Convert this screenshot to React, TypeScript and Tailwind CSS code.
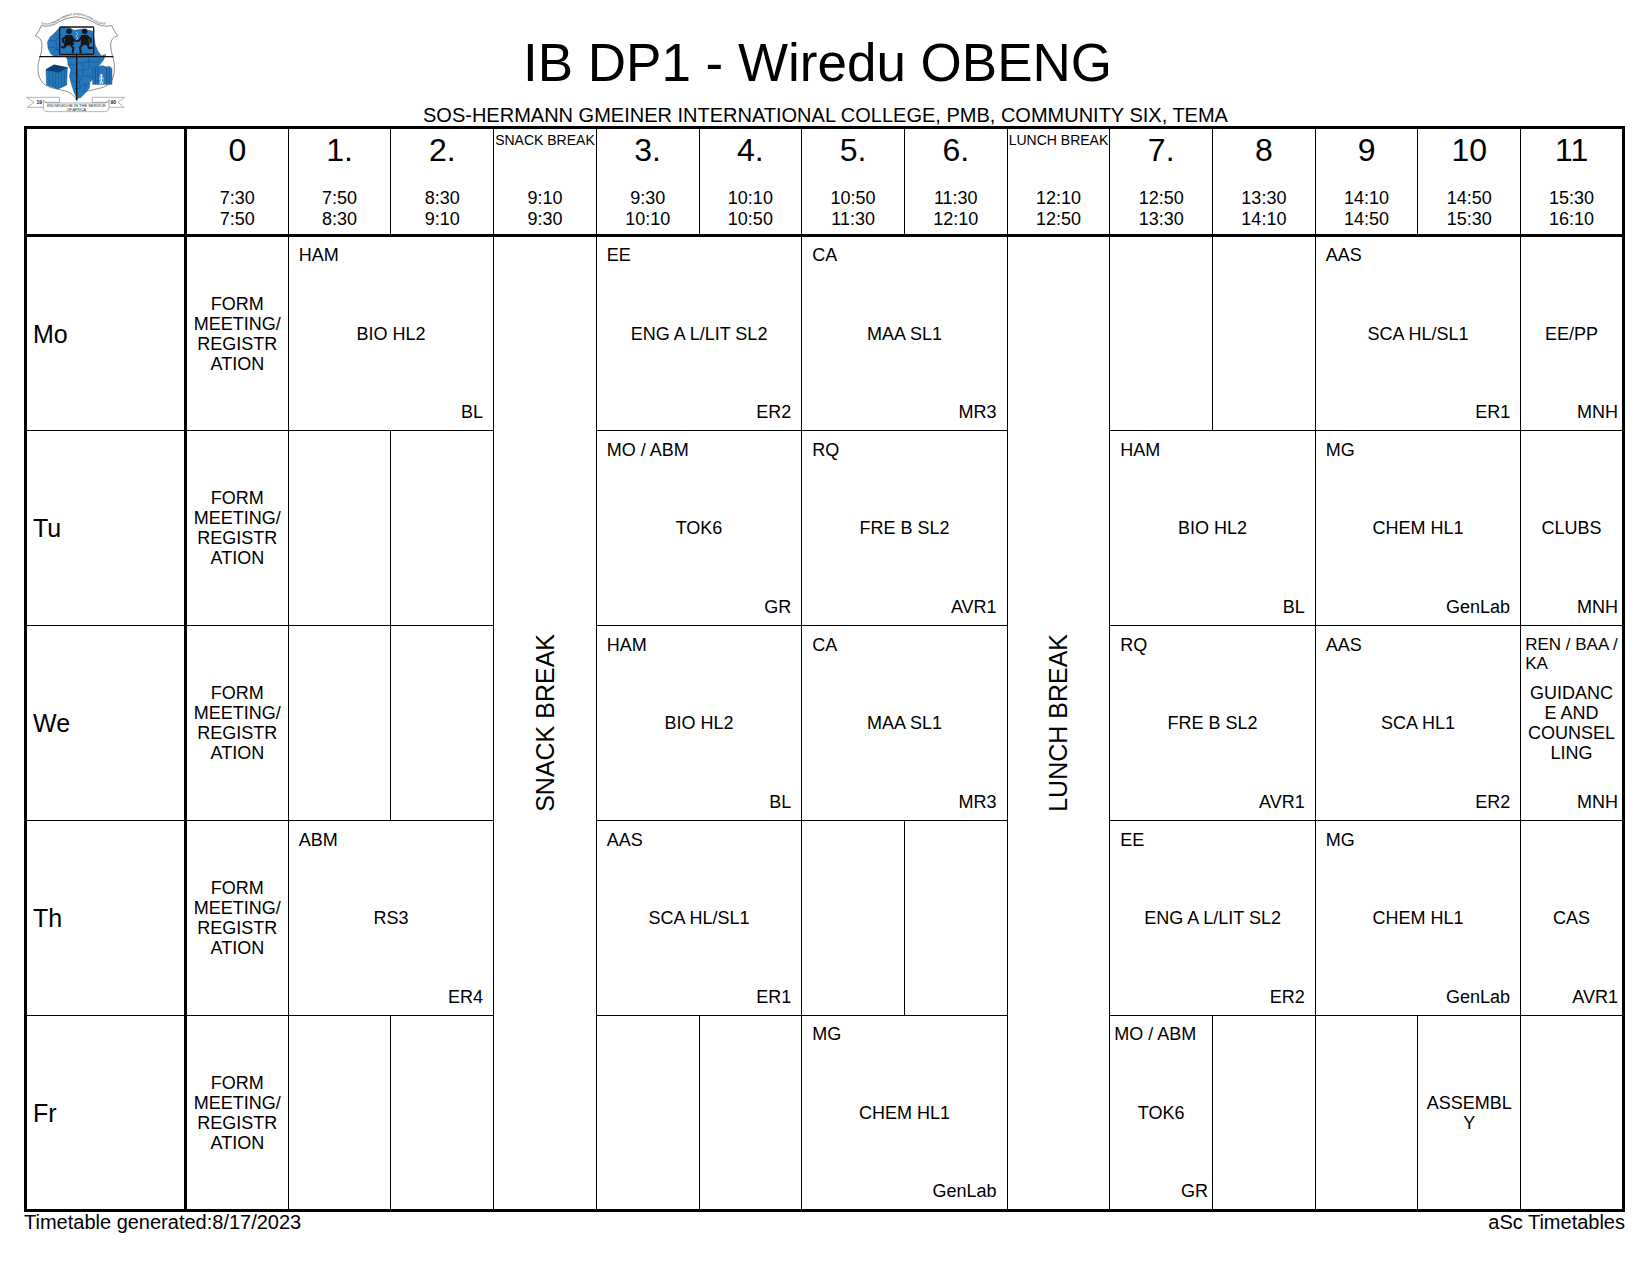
import React from "react";

type Lesson = {
  span?: 1 | 2;
  teacher?: string[];
  subject?: string[];
  room?: string;
};

type Slot = Lesson | "snack" | "lunch";

const periods = [
  { name: "0", from: "7:30", to: "7:50" },
  { name: "1.", from: "7:50", to: "8:30" },
  { name: "2.", from: "8:30", to: "9:10" },
  { name: "SNACK BREAK", from: "9:10", to: "9:30", isBreak: true },
  { name: "3.", from: "9:30", to: "10:10" },
  { name: "4.", from: "10:10", to: "10:50" },
  { name: "5.", from: "10:50", to: "11:30" },
  { name: "6.", from: "11:30", to: "12:10" },
  { name: "LUNCH BREAK", from: "12:10", to: "12:50", isBreak: true },
  { name: "7.", from: "12:50", to: "13:30" },
  { name: "8", from: "13:30", to: "14:10" },
  { name: "9", from: "14:10", to: "14:50" },
  { name: "10", from: "14:50", to: "15:30" },
  { name: "11", from: "15:30", to: "16:10" },
];

const form: Lesson = { subject: ["FORM", "MEETING/", "REGISTR", "ATION"] };
const free: Lesson = {};
const double = (teacher: string, subject: string, room: string): Lesson => ({
  span: 2,
  teacher: [teacher],
  subject: [subject],
  room,
});

const days: { name: string; slots: Slot[] }[] = [
  {
    name: "Mo",
    slots: [
      form,
      double("HAM", "BIO HL2", "BL"),
      "snack",
      double("EE", "ENG A L/LIT SL2", "ER2"),
      double("CA", "MAA SL1", "MR3"),
      "lunch",
      free,
      free,
      double("AAS", "SCA HL/SL1", "ER1"),
      { subject: ["EE/PP"], room: "MNH" },
    ],
  },
  {
    name: "Tu",
    slots: [
      form,
      free,
      free,
      double("MO / ABM", "TOK6", "GR"),
      double("RQ", "FRE B SL2", "AVR1"),
      double("HAM", "BIO HL2", "BL"),
      double("MG", "CHEM HL1", "GenLab"),
      { subject: ["CLUBS"], room: "MNH" },
    ],
  },
  {
    name: "We",
    slots: [
      form,
      free,
      free,
      double("HAM", "BIO HL2", "BL"),
      double("CA", "MAA SL1", "MR3"),
      double("RQ", "FRE B SL2", "AVR1"),
      double("AAS", "SCA HL1", "ER2"),
      {
        teacher: ["REN / BAA /", "KA"],
        subject: ["GUIDANC", "E AND", "COUNSEL", "LING"],
        room: "MNH",
      },
    ],
  },
  {
    name: "Th",
    slots: [
      form,
      double("ABM", "RS3", "ER4"),
      double("AAS", "SCA HL/SL1", "ER1"),
      free,
      free,
      double("EE", "ENG A L/LIT SL2", "ER2"),
      double("MG", "CHEM HL1", "GenLab"),
      { subject: ["CAS"], room: "AVR1" },
    ],
  },
  {
    name: "Fr",
    slots: [
      form,
      free,
      free,
      free,
      free,
      double("MG", "CHEM HL1", "GenLab"),
      { teacher: ["MO / ABM"], subject: ["TOK6"], room: "GR" },
      free,
      free,
      { subject: ["ASSEMBL", "Y"] },
      free,
    ],
  },
];

function Lines({ lines }: { lines?: string[] }) {
  return (
    <>
      {lines?.map((line) => (
        <span key={line} className="block whitespace-nowrap">
          {line}
        </span>
      ))}
    </>
  );
}

function LessonCell({ lesson }: { lesson: Lesson }) {
  const wide = lesson.span === 2;
  const compact = (lesson.teacher?.length ?? 0) > 1;
  return (
    <td colSpan={lesson.span ?? 1} className="border border-black p-0">
      <div
        className={`grid h-[193px] grid-rows-[1fr_auto_1fr] py-2 text-[18px] leading-5 ${
          wide ? "px-[10px]" : "px-1"
        }`}
      >
        <div className={compact ? "text-[17px] leading-[19px]" : ""}>
          <Lines lines={lesson.teacher} />
        </div>
        <div className="flex flex-col items-center">
          <Lines lines={lesson.subject} />
        </div>
        <div className="self-end text-right">{lesson.room}</div>
      </div>
    </td>
  );
}

function BreakCell({ label }: { label: string }) {
  return (
    <td rowSpan={days.length} className="border border-black p-0">
      <div className="flex items-center justify-center">
        <span className="rotate-180 whitespace-nowrap text-[25px] leading-7 [writing-mode:vertical-rl]">
          {label}
        </span>
      </div>
    </td>
  );
}

function Crest() {
  return (
    <svg viewBox="0 0 330 345" className="h-[115px] w-[110px]" role="img" aria-label="College crest">
      <defs>
        <path id="crest-arch" d="M64 57 Q92 64 116 47 Q168 13 220 47 Q244 64 276 57" />
      </defs>
      <text fontFamily="Liberation Sans, sans-serif" fontSize="8" fill="#222">
        <textPath href="#crest-arch">SOS-HERMANN GMEINER INTERNATIONAL COLLEGE</textPath>
      </text>
      {/* shield */}
      <path
        d="M64 62 Q58 78 46 92 Q66 98 66 120 Q66 140 60 156 Q52 178 54 200 Q58 236 90 247 Q116 253 140 259 Q160 266 170 286 Q180 266 200 259 Q224 253 250 247 Q280 236 283 200 Q285 178 279 156 Q272 140 272 120 Q272 98 293 92 Q282 78 275 62 Q244 68 220 51 Q168 20 116 51 Q92 68 64 62Z"
        fill="none"
        stroke="#555"
        strokeWidth="2"
      />
      {/* continent */}
      <path
        d="M118 68 L132 66 L150 68 L162 76 L186 72 L206 76 L218 78 L222 98 L226 120 L234 138 L244 152 L258 148 L250 166 L236 184 L224 200 L222 220 L210 232 L208 250 L196 264 L182 278 L170 280 L162 262 L154 238 L148 214 L152 194 L144 180 L142 162 L134 152 L118 156 L104 156 L92 146 L84 130 L82 112 L90 96 L104 84Z"
        fill="#2477bd"
        stroke="#174f7d"
        strokeWidth="1"
      />
      <path d="M245 196 L252 186 L255 198 L248 222 L240 228 L238 214Z" fill="#2477bd" />
      <g fill="none" stroke="#164a78" strokeWidth="1.5">
        <path d="M88 106 L108 108 L118 92 L104 86 M84 126 L104 128 L120 136 M108 108 L110 132 M98 146 L110 132 L122 150 M142 162 L160 158 L170 142 L186 148 L204 144 L222 150 M146 178 L164 180 L174 172 L190 176 L204 168 L224 172 L240 170 M150 204 L172 206 L176 194 L194 196 L208 186 L224 196 M154 228 L178 230 L184 216 L200 212 L220 216 M164 252 L180 250 L190 238 L206 240 M188 176 L192 198 L186 214 M204 144 L206 168 L208 186 M174 206 L178 230 L180 250 M194 260 L196 240" />
      </g>
      {/* shield divisions and picture frame */}
      <path d="M58 155 H280 M170 148 V286" fill="none" stroke="#111" strokeWidth="4" />
      <rect x="119" y="66" width="102" height="82" rx="3" fill="none" stroke="#161616" strokeWidth="4" />
      {/* children */}
      <g fill="#151515" stroke="#151515" strokeLinecap="round" strokeLinejoin="round">
        <circle cx="147" cy="79" r="8" strokeWidth="1" />
        <circle cx="194" cy="79" r="8" strokeWidth="1" />
        <path d="M138 92 L154 92 L160 118 L134 120Z" strokeWidth="4" />
        <path d="M202 92 L186 92 L184 118 L206 118Z" strokeWidth="4" />
        <path
          d="M140 93 L128 102 L130 112 M154 93 L162 106 L170 108 M140 118 L132 128 L126 126 M152 118 L160 130 L158 142 M200 93 L212 102 L212 112 M186 93 L178 106 L170 108 M188 118 L180 128 L182 142 M202 118 L208 130 L216 128"
          fill="none"
          strokeWidth="6"
        />
      </g>
      <path d="M168 80 l5 6 -4 7 4 7 -4 6" fill="none" stroke="#a9c8e2" strokeWidth="3" />
      {/* cube */}
      <path d="M78 194 L102 180 L142 188 L140 240 L114 252 L80 240Z" fill="#2477bd" stroke="#103f6e" strokeWidth="1.5" />
      <path d="M78 194 L102 180 L142 188 L116 202Z" fill="#0b3f78" stroke="#0b2f58" strokeWidth="1.5" />
      <path d="M116 202 L114 252 M98 199 L98 246 M88 197 L88 243 M107 201 L106 249 M126 198 L124 247 M134 194 L133 243" fill="none" stroke="#103f6e" strokeWidth="1" />
      {/* gate */}
      <path d="M218 238 V190 Q226 182 234 186 Q246 178 258 186 Q272 182 276 192 V238Z" fill="#2477bd" stroke="#174f7d" strokeWidth="1.5" />
      <path d="M226 188 V238 M234 188 V238 M260 188 V238 M268 190 V238" stroke="#103f6e" strokeWidth="2" />
      <path d="M237 238 V216 Q244 198 251 216 V238Z" fill="#5a9bd0" />
      <circle cx="244" cy="210" r="3" fill="#fff" />
      <path d="M244 213 V226 L240 237 M244 226 L248 237 M238 222 L244 217 L250 222" fill="none" stroke="#fff" strokeWidth="2.5" />
      {/* ribbon */}
      <g fill="#fff" stroke="#666" strokeWidth="1.5">
        <path d="M20 277 H118 V292 H72 V307 H22 L42 292Z" />
        <path d="M314 277 H217 V292 H266 V307 H312 L294 292Z" />
        <path d="M70 284 Q72 294 84 294 H254 Q266 294 267 284 V308 Q266 320 254 320 H84 Q70 320 70 308Z" />
      </g>
      <path d="M170 262 V286" stroke="#222" strokeWidth="3" />
      <g fontFamily="Liberation Sans, sans-serif" fill="#222" textAnchor="middle">
        <text x="58" y="298" fontSize="15" fontWeight="bold">19</text>
        <text x="280" y="298" fontSize="15" fontWeight="bold">90</text>
        <text x="169" y="306" fontSize="12">KNOWLEDGE IN THE SERVICE</text>
        <text x="169" y="317" fontSize="11">OF AFRICA</text>
      </g>
    </svg>
  );
}

export default function App() {
  return (
    <main className="min-h-screen bg-white pb-10 font-['Liberation_Sans',Arial,sans-serif] text-black">
      <header className="grid grid-cols-[110px_1fr_110px] px-5">
        <div className="pt-[5px]">
          <Crest />
        </div>
        <div className="pt-[33px] text-center">
          <h1 className="pr-4 text-[53px] leading-[60px]">IB DP1 - Wiredu OBENG</h1>
          <p className="mt-[11px] text-[20px] leading-[22px]">
            SOS-HERMANN GMEINER INTERNATIONAL COLLEGE, PMB, COMMUNITY SIX, TEMA
          </p>
        </div>
      </header>

      <div className="pr-[26px] pl-6">
        <table className="w-full table-fixed border-collapse border-[3px] border-black">
          <colgroup>
            <col className="w-[160px]" />
            {periods.map((p) => (
              <col key={p.name} />
            ))}
          </colgroup>
          <thead>
            <tr className="border-b-[3px] border-black">
              <td className="border-r-[3px] border-black p-0" />
              {periods.map((p) => (
                <th key={p.name} scope="col" className="border-x border-black p-0 font-normal">
                  <div className="flex h-[105px] flex-col items-center justify-between pt-[3px] pb-1">
                    <span
                      className={
                        p.isBreak
                          ? "whitespace-nowrap text-[14px] leading-4"
                          : "text-[32px] leading-9"
                      }
                    >
                      {p.name}
                    </span>
                    <span className="text-[18px] leading-[21px]">
                      {p.from}
                      <br />
                      {p.to}
                    </span>
                  </div>
                </th>
              ))}
            </tr>
          </thead>
          <tbody>
            {days.map((day) => (
              <tr key={day.name} className="h-[195px]">
                <th
                  scope="row"
                  className="border-y border-r-[3px] border-black py-0 pr-0 pl-[6px] text-left text-[25px] leading-7 font-normal"
                >
                  {day.name}
                </th>
                {day.slots.map((slot, i) => {
                  if (slot === "snack") return <BreakCell key={i} label="SNACK BREAK" />;
                  if (slot === "lunch") return <BreakCell key={i} label="LUNCH BREAK" />;
                  return <LessonCell key={i} lesson={slot} />;
                })}
              </tr>
            ))}
          </tbody>
        </table>
        <footer className="flex justify-between text-[20px] leading-5">
          <span>Timetable generated:8/17/2023</span>
          <span>aSc Timetables</span>
        </footer>
      </div>
    </main>
  );
}
